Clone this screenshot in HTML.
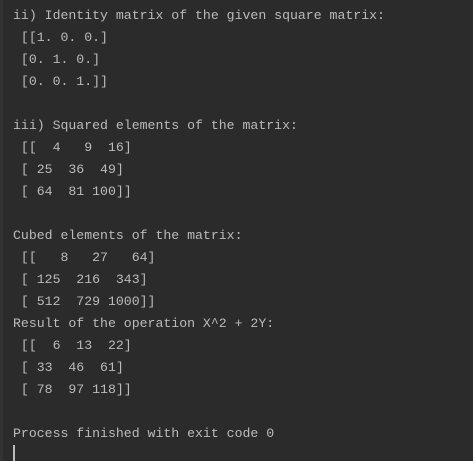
<!DOCTYPE html>
<html><head><meta charset="utf-8"><style>
html,body{margin:0;padding:0;}
body{width:473px;height:461px;background:#2b2b2b;overflow:hidden;position:relative;}
.strip{position:absolute;left:0;top:0;width:3px;height:461px;background:#313335;}
pre{position:absolute;left:13px;top:5px;margin:0;font-family:"Liberation Mono",monospace;font-size:13.2px;line-height:22px;color:#bbbbbb;white-space:pre;}
.cur{position:absolute;left:13px;top:445px;width:2px;height:16px;background:#bbbbbb;}
</style></head><body>
<div class="strip"></div>
<pre>ii) Identity matrix of the given square matrix:
 [[1. 0. 0.]
 [0. 1. 0.]
 [0. 0. 1.]]

iii) Squared elements of the matrix:
 [[  4   9  16]
 [ 25  36  49]
 [ 64  81 100]]

Cubed elements of the matrix:
 [[   8   27   64]
 [ 125  216  343]
 [ 512  729 1000]]
Result of the operation X^2 + 2Y:
 [[  6  13  22]
 [ 33  46  61]
 [ 78  97 118]]

Process finished with exit code 0</pre>
<div class="cur"></div>
</body></html>
